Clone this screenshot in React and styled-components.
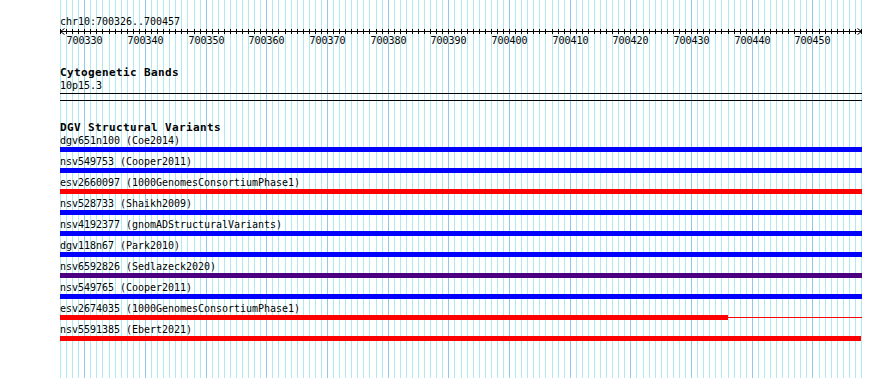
import React from "react";
import styled, { createGlobalStyle } from "styled-components";

const START = 700326;
const BASES = 132;
const VIEW_W = 802;
const PX = 801 / BASES;
const MONO = `"DejaVu Sans Mono", "Liberation Mono", monospace`;

const GlobalStyle = createGlobalStyle`
  html, body { margin: 0; padding: 0; background: #ffffff; }
  body { font-family: ${MONO}; color: #000; }
`;

const Page = styled.div`
  position: relative;
  width: 890px;
  height: 378px;
  overflow: hidden;
  background: #ffffff;
`;

const GridLayer = styled.svg`
  position: absolute;
  left: 60px;
  top: 0;
  z-index: 0;
  display: block;
`;

const Tracks = styled.div`
  position: relative;
  z-index: 1;
  display: flex;
  flex-direction: column;
  width: ${VIEW_W}px;
  padding: 16px 0 0 60px;
`;

const Position = styled.div`
  font-family: ${MONO};
  font-size: 10px;
  line-height: 12px;
  letter-spacing: -0.02px;
  white-space: pre;
`;

const Ruler = styled.svg`
  display: block;
  width: ${VIEW_W}px;
  height: 20px;
`;

const TrackTitle = styled.div`
  font-family: ${MONO};
  font-weight: bold;
  font-size: 11px;
  line-height: 12px;
  letter-spacing: 0.38px;
  margin-top: ${(p) => p.$top}px;
  white-space: pre;
`;

const Label = styled.div`
  font-family: ${MONO};
  font-size: 10px;
  line-height: 12px;
  letter-spacing: -0.02px;
  margin-top: ${(p) => p.$top || 0}px;
  white-space: pre;
`;

const Rule = styled.div`
  height: 1px;
  width: ${VIEW_W}px;
  background: #000;
  margin-top: ${(p) => p.$top}px;
`;

const Rows = styled.div`
  display: flex;
  flex-direction: column;
  margin-top: 1px;
`;

const Row = styled.div`
  display: flex;
  flex-direction: column;
  margin-bottom: 4px;
`;

const BarLine = styled.div`
  display: flex;
  align-items: center;
  height: 5px;
`;

const Thick = styled.div`
  height: 5px;
  background: ${(p) => p.$color};
  flex: none;
`;

const Thin = styled.div`
  height: 1px;
  background: ${(p) => p.$color};
  flex: none;
`;

const BLUE = "#0000ff";
const RED = "#ff0000";
const PURPLE = "#4b0082";

const variants = [
  { name: "dgv651n100 (Coe2014)", color: BLUE, thick: 802, end: 802 },
  { name: "nsv549753 (Cooper2011)", color: BLUE, thick: 802, end: 802 },
  { name: "esv2660097 (1000GenomesConsortiumPhase1)", color: RED, thick: 802, end: 802 },
  { name: "nsv528733 (Shaikh2009)", color: BLUE, thick: 802, end: 802 },
  { name: "nsv4192377 (gnomADStructuralVariants)", color: BLUE, thick: 802, end: 802 },
  { name: "dgv118n67 (Park2010)", color: BLUE, thick: 802, end: 802 },
  { name: "nsv6592826 (Sedlazeck2020)", color: PURPLE, thick: 802, end: 802 },
  { name: "nsv549765 (Cooper2011)", color: BLUE, thick: 802, end: 802 },
  { name: "esv2674035 (1000GenomesConsortiumPhase1)", color: RED, thick: 668, end: 802 },
  { name: "nsv5591385 (Ebert2021)", color: RED, thick: 801, end: 801 },
];

const baseX = (i) => Math.round(i * PX);

function Grid() {
  const lines = [];
  for (let i = 0; i <= BASES; i++) {
    const major = (START + i) % 10 === 0;
    lines.push(
      <rect
        key={i}
        x={baseX(i)}
        y={0}
        width={1}
        height={378}
        fill={major ? "#8ccbea" : "#aeeaf0"}
      />
    );
  }
  return (
    <GridLayer width={VIEW_W} height={378} viewBox={`0 0 ${VIEW_W} 378`}>
      {lines}
    </GridLayer>
  );
}

function Axis() {
  const ticks = [];
  const labels = [];
  for (let i = 0; i <= BASES; i++) {
    const x = baseX(i) + 0.5;
    ticks.push(<line key={i} x1={x} x2={x} y1={1} y2={6} stroke="#000" strokeWidth={1} />);
    const b = START + i;
    if (b % 10 === 0 && i < BASES) {
      labels.push(
        <text
          key={"l" + i}
          x={x}
          y={16}
          textAnchor="middle"
          fontFamily={MONO}
          fontSize="10"
          fill="#000"
        >
          {b}
        </text>
      );
    }
  }
  const end = baseX(BASES) + 0.5;
  return (
    <Ruler viewBox={`0 0 ${VIEW_W} 20`}>
      <line x1={0} x2={end} y1={3.5} y2={3.5} stroke="#000" strokeWidth={1} />
      {ticks}
      <polyline points="4.5,0.5 0.5,3.5 4.5,6.5" fill="none" stroke="#000" strokeWidth={1} />
      <polyline
        points={`${end - 4},0.5 ${end},3.5 ${end - 4},6.5`}
        fill="none"
        stroke="#000"
        strokeWidth={1}
      />
      {labels}
    </Ruler>
  );
}

export default function App() {
  return (
    <Page>
      <GlobalStyle />
      <Grid />
      <Tracks>
        <Position>chr10:700326..700457</Position>
        <Axis />
        <TrackTitle $top={19}>Cytogenetic Bands</TrackTitle>
        <Label $top={1}>10p15.3</Label>
        <Rule $top={1} />
        <Rule $top={6} />
        <TrackTitle $top={21}>DGV Structural Variants</TrackTitle>
        <Rows>
          {variants.map((v) => (
            <Row key={v.name}>
              <Label>{v.name}</Label>
              <BarLine>
                <Thick $color={v.color} style={{ width: v.thick }} />
                {v.end > v.thick && (
                  <Thin $color={v.color} style={{ width: v.end - v.thick }} />
                )}
              </BarLine>
            </Row>
          ))}
        </Rows>
      </Tracks>
    </Page>
  );
}
